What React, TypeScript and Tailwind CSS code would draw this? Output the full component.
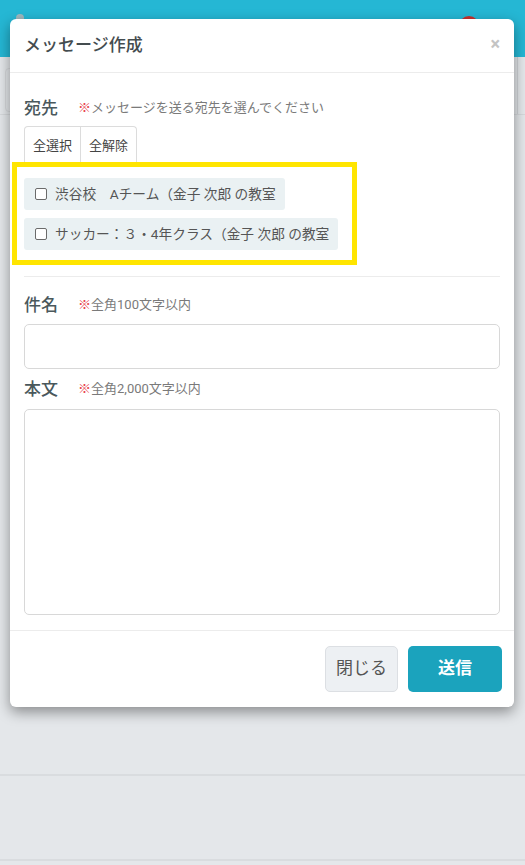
import React from "react";

const font = "font-['Roboto','Noto_Sans_CJK_JP',sans-serif]";

function Label({ title, hint }: { title: string; hint: string }) {
  return (
    <div className="flex items-center gap-[20px]">
      <span className="text-[17px] font-medium leading-6 text-[#4a585c]">{title}</span>
      <span className="text-[13px] leading-6 text-[#7a7a7a]">
        <span className="text-[#e8434a]">※</span>
        {hint}
      </span>
    </div>
  );
}

function Target({ text }: { text: string }) {
  return (
    <label className="flex h-8 w-fit items-center gap-[8px] rounded-[3px] bg-[#eaf1f3] pl-[11px] pr-[9px] text-[13.7px] text-[#555]">
      <span className="h-[12px] w-[12px] rounded-[2px] border border-[#6b6b6b] bg-white" />
      <span>{text}</span>
    </label>
  );
}

export default function App() {
  return (
    <div className={`relative h-[865px] w-[525px] overflow-hidden bg-[#e4e7ea] ${font}`}>
      {/* page behind the overlay */}
      <div className="relative h-[57px] bg-[#25b7d4]">
        <span className="absolute left-[16px] top-[14px] h-[8px] w-[8px] rounded-full bg-[#9fb7bd]" />
        <span className="absolute left-[459px] top-[16px] h-[20px] w-[20px] rounded-full bg-[#c9302c]" />
      </div>
      <div className="flex h-[58px] border-b border-[#d6d9dc]">
        <div className="mx-[5px] mt-[11px] h-[44px] flex-1 rounded-[4px] border border-[#d6d9dc]" />
        <div className="w-[8px] border-l border-[#d0d3d6]" />
      </div>
      <div className="mt-[659px] h-[87px] border-y-2 border-[#d9dcdf]" />

      {/* modal */}
      <div className="absolute left-[10px] top-[19px] w-[504px] rounded-[6px] bg-white shadow-[0_5px_14px_rgba(0,0,0,0.4)]">
        <div className="flex h-[54px] items-center justify-between border-b border-[#ececec] pl-[14px] pr-[14px]">
          <h2 className="text-[17px] font-medium text-[#444c4f]">メッセージ作成</h2>
          <span className="pb-[4px] text-[18px] font-bold leading-none text-[#c4c4c4]">×</span>
        </div>

        <div className="px-[14px] pb-[15px] pt-[23px]">
          <Label title="宛先" hint="メッセージを送る宛先を選んでください" />
          <div className="mt-[6px] flex h-[36px] w-fit rounded-t-[4px] border border-b-0 border-[#dcdcdc] text-[13px] text-[#444]">
            <span className="flex items-center border-r border-[#dcdcdc] px-[8px] pt-[3px]">全選択</span>
            <span className="flex items-center px-[8px] pt-[3px]">全解除</span>
          </div>
          <div className="-ml-[12px] flex w-[345px] flex-col gap-[8px] border-[5px] border-[#ffe500] pb-[10px] pl-[7px] pt-[11px]">
            <Target text="渋谷校　Aチーム（金子 次郎 の教室" />
            <Target text="サッカー：３・4年クラス（金子 次郎 の教室" />
          </div>

          <div className="mt-[11px] border-t border-[#ececec]" />

          <div className="mt-[16px]">
            <Label title="件名" hint="全角100文字以内" />
          </div>
          <div className="mt-[7px] h-[45px] rounded-[5px] border border-[#d8d8d8]" />

          <div className="mt-[8px]">
            <Label title="本文" hint="全角2,000文字以内" />
          </div>
          <div className="mt-[8px] h-[206px] rounded-[5px] border border-[#d8d8d8]" />
        </div>

        <div className="flex justify-end gap-[10px] border-t border-[#ececec] px-[12px] py-[15px]">
          <button className="h-[46px] w-[73px] rounded-[5px] border border-[#dcdfe3] bg-[#edf0f3] text-[17px] text-[#555]">
            閉じる
          </button>
          <button className="h-[46px] w-[94px] rounded-[5px] bg-[#1ba3bd] text-[17px] font-bold text-white">
            送信
          </button>
        </div>
      </div>
    </div>
  );
}
